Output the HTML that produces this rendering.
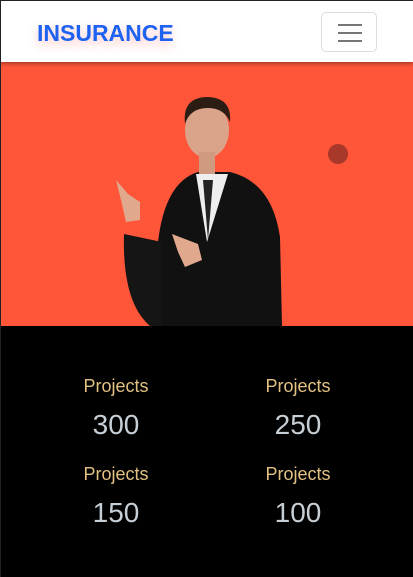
<!DOCTYPE html>
<html><head><style>
*{margin:0;padding:0;box-sizing:border-box}
body{width:413px;height:577px;overflow:hidden;background:#000;font-family:"Liberation Sans",sans-serif;position:relative}
.frame{position:absolute;left:0;top:0;width:413px;height:577px;border-left:1px solid #222;border-top:1px solid #222;z-index:5;pointer-events:none}
.nav{position:absolute;left:0;top:0;width:413px;height:62px;background:#fff;z-index:2;box-shadow:0 2px 4px rgba(0,0,0,.35)}
.logo{position:absolute;left:37px;top:20px;font-weight:bold;font-size:23px;color:#1d62f0;text-shadow:0 4px 10px rgba(255,80,80,.35)}
.tog{position:absolute;left:321px;top:12px;width:56px;height:40px;border:1px solid #ddd;border-radius:5px}
.tog i{position:absolute;left:16px;width:24px;height:2px;background:#777}
.hero{position:absolute;left:0;top:62px;width:413px;height:264px;background:#ff563a}
.st{position:absolute;width:120px;text-align:center}
.st .l{font-size:18px;color:#e2c182}
.st .n{font-size:28px;color:#c7cfd6;margin-top:12px}
</style></head><body>
<div class="frame"></div>
<div class="nav"><div class="logo">INSURANCE</div><div class="tog"><i style="top:11px"></i><i style="top:19px"></i><i style="top:27px"></i></div></div>
<div class="hero">
<div style="position:absolute;left:328px;top:82px;width:20px;height:20px;border-radius:50%;background:#a8382a"></div>
<svg width="413" height="264" style="position:absolute;left:0;top:0">
<path d="M150 264 L158 180 Q165 120 198 110 L230 110 Q272 120 280 175 L282 264Z" fill="#111"/>
<path d="M124 172 Q122 240 150 264 L162 264 L162 180Z" fill="#151515"/>
<path d="M196 112 L207 180 L228 112Z" fill="#eee"/>
<path d="M203 118 L208 178 L213 118Z" fill="#222"/>
<ellipse cx="207" cy="68" rx="22" ry="28" fill="#d9a48a"/>
<path d="M185 62 Q182 35 208 35 Q232 36 230 60 Q224 46 208 46 Q190 46 185 62Z" fill="#2b1c14"/>
<rect x="199" y="90" width="16" height="22" fill="#cf9a80"/>
<path d="M116 118 L128 132 L140 140 L140 158 L126 160 L121 138Z" fill="#e0a98e"/>
<path d="M172 172 L198 182 L202 198 L185 205 L178 190Z" fill="#e0a98e"/>
</svg>
</div>
<div class="st" style="left:56px;top:376px"><div class="l">Projects</div><div class="n">300</div></div>
<div class="st" style="left:238px;top:376px"><div class="l">Projects</div><div class="n">250</div></div>
<div class="st" style="left:56px;top:464px"><div class="l">Projects</div><div class="n">150</div></div>
<div class="st" style="left:238px;top:464px"><div class="l">Projects</div><div class="n">100</div></div>
</body></html>
